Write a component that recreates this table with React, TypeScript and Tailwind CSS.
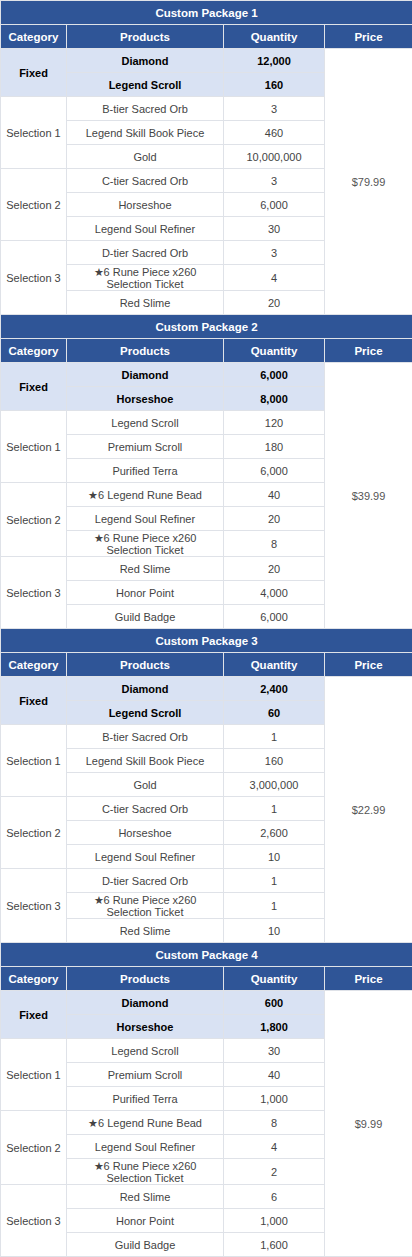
type Item = { name: string; qty: string };

interface PackageData {
  title: string;
  price: string;
  fixed: Item[];
  groups: { label: string; items: Item[] }[];
}

const RUNE_TICKET = "★6 Rune Piece x260\nSelection Ticket";

const packages: PackageData[] = [
  {
    title: "Custom Package 1",
    price: "$79.99",
    fixed: [
      { name: "Diamond", qty: "12,000" },
      { name: "Legend Scroll", qty: "160" },
    ],
    groups: [
      {
        label: "Selection 1",
        items: [
          { name: "B-tier Sacred Orb", qty: "3" },
          { name: "Legend Skill Book Piece", qty: "460" },
          { name: "Gold", qty: "10,000,000" },
        ],
      },
      {
        label: "Selection 2",
        items: [
          { name: "C-tier Sacred Orb", qty: "3" },
          { name: "Horseshoe", qty: "6,000" },
          { name: "Legend Soul Refiner", qty: "30" },
        ],
      },
      {
        label: "Selection 3",
        items: [
          { name: "D-tier Sacred Orb", qty: "3" },
          { name: RUNE_TICKET, qty: "4" },
          { name: "Red Slime", qty: "20" },
        ],
      },
    ],
  },
  {
    title: "Custom Package 2",
    price: "$39.99",
    fixed: [
      { name: "Diamond", qty: "6,000" },
      { name: "Horseshoe", qty: "8,000" },
    ],
    groups: [
      {
        label: "Selection 1",
        items: [
          { name: "Legend Scroll", qty: "120" },
          { name: "Premium Scroll", qty: "180" },
          { name: "Purified Terra", qty: "6,000" },
        ],
      },
      {
        label: "Selection 2",
        items: [
          { name: "★6 Legend Rune Bead", qty: "40" },
          { name: "Legend Soul Refiner", qty: "20" },
          { name: RUNE_TICKET, qty: "8" },
        ],
      },
      {
        label: "Selection 3",
        items: [
          { name: "Red Slime", qty: "20" },
          { name: "Honor Point", qty: "4,000" },
          { name: "Guild Badge", qty: "6,000" },
        ],
      },
    ],
  },
  {
    title: "Custom Package 3",
    price: "$22.99",
    fixed: [
      { name: "Diamond", qty: "2,400" },
      { name: "Legend Scroll", qty: "60" },
    ],
    groups: [
      {
        label: "Selection 1",
        items: [
          { name: "B-tier Sacred Orb", qty: "1" },
          { name: "Legend Skill Book Piece", qty: "160" },
          { name: "Gold", qty: "3,000,000" },
        ],
      },
      {
        label: "Selection 2",
        items: [
          { name: "C-tier Sacred Orb", qty: "1" },
          { name: "Horseshoe", qty: "2,600" },
          { name: "Legend Soul Refiner", qty: "10" },
        ],
      },
      {
        label: "Selection 3",
        items: [
          { name: "D-tier Sacred Orb", qty: "1" },
          { name: RUNE_TICKET, qty: "1" },
          { name: "Red Slime", qty: "10" },
        ],
      },
    ],
  },
  {
    title: "Custom Package 4",
    price: "$9.99",
    fixed: [
      { name: "Diamond", qty: "600" },
      { name: "Horseshoe", qty: "1,800" },
    ],
    groups: [
      {
        label: "Selection 1",
        items: [
          { name: "Legend Scroll", qty: "30" },
          { name: "Premium Scroll", qty: "40" },
          { name: "Purified Terra", qty: "1,000" },
        ],
      },
      {
        label: "Selection 2",
        items: [
          { name: "★6 Legend Rune Bead", qty: "8" },
          { name: "Legend Soul Refiner", qty: "4" },
          { name: RUNE_TICKET, qty: "2" },
        ],
      },
      {
        label: "Selection 3",
        items: [
          { name: "Red Slime", qty: "6" },
          { name: "Honor Point", qty: "1,000" },
          { name: "Guild Badge", qty: "1,600" },
        ],
      },
    ],
  },
];

const cell = "border border-[#dfe2e8] text-center align-middle p-0";
const head = `${cell} bg-[#2f5597] text-white font-bold text-[11.5px] h-[24px]`;
const fixedCell = `${cell} bg-[#d9e2f3] text-black font-semibold h-[24px]`;
const bodyCell = `${cell} text-[#444]`;

function PackageRows({ pkg }: { pkg: PackageData }) {
  const bodyRows = pkg.fixed.length + pkg.groups.reduce((n, g) => n + g.items.length, 0);

  return (
    <>
      <tr>
        <td colSpan={4} className={head}>
          {pkg.title}
        </td>
      </tr>
      <tr>
        <td className={head}>Category</td>
        <td className={head}>Products</td>
        <td className={head}>Quantity</td>
        <td className={head}>Price</td>
      </tr>

      {/* Fixed items */}
      {pkg.fixed.map((item, i) => (
        <tr key={`f${i}`}>
          {i === 0 && (
            <td rowSpan={pkg.fixed.length} className={fixedCell}>
              Fixed
            </td>
          )}
          <td className={fixedCell}>{item.name}</td>
          <td className={fixedCell}>{item.qty}</td>
          {i === 0 && (
            <td rowSpan={bodyRows} className={`${cell} bg-white text-[#555]`}>
              {pkg.price}
            </td>
          )}
        </tr>
      ))}

      {/* Selections */}
      {pkg.groups.map((g) =>
        g.items.map((item, i) => {
          const twoLine = item.name.includes("\n");
          return (
            <tr key={`${g.label}${i}`} className={twoLine ? "h-[26px]" : "h-[24px]"}>
              {i === 0 && (
                <td rowSpan={g.items.length} className={bodyCell}>
                  {g.label}
                </td>
              )}
              <td
                className={`${bodyCell} whitespace-pre-line ${
                  twoLine ? "leading-[12px] h-[26px]" : "h-[24px]"
                }`}
              >
                {item.name}
              </td>
              <td className={`${bodyCell} ${twoLine ? "h-[26px]" : "h-[24px]"}`}>{item.qty}</td>
            </tr>
          );
        })
      )}
    </>
  );
}

export default function App() {
  return (
    <div className="w-[412px] bg-white">
      <table
        className="w-[412px] table-fixed border-collapse text-[11px] leading-[14px]"
        style={{ fontFamily: '"Liberation Sans", Arial, sans-serif' }}
      >
        <colgroup>
          <col className="w-[66px]" />
          <col className="w-[157px]" />
          <col className="w-[101px]" />
          <col className="w-[88px]" />
        </colgroup>
        <tbody>
          {packages.map((p) => (
            <PackageRows key={p.title} pkg={p} />
          ))}
        </tbody>
      </table>
    </div>
  );
}
